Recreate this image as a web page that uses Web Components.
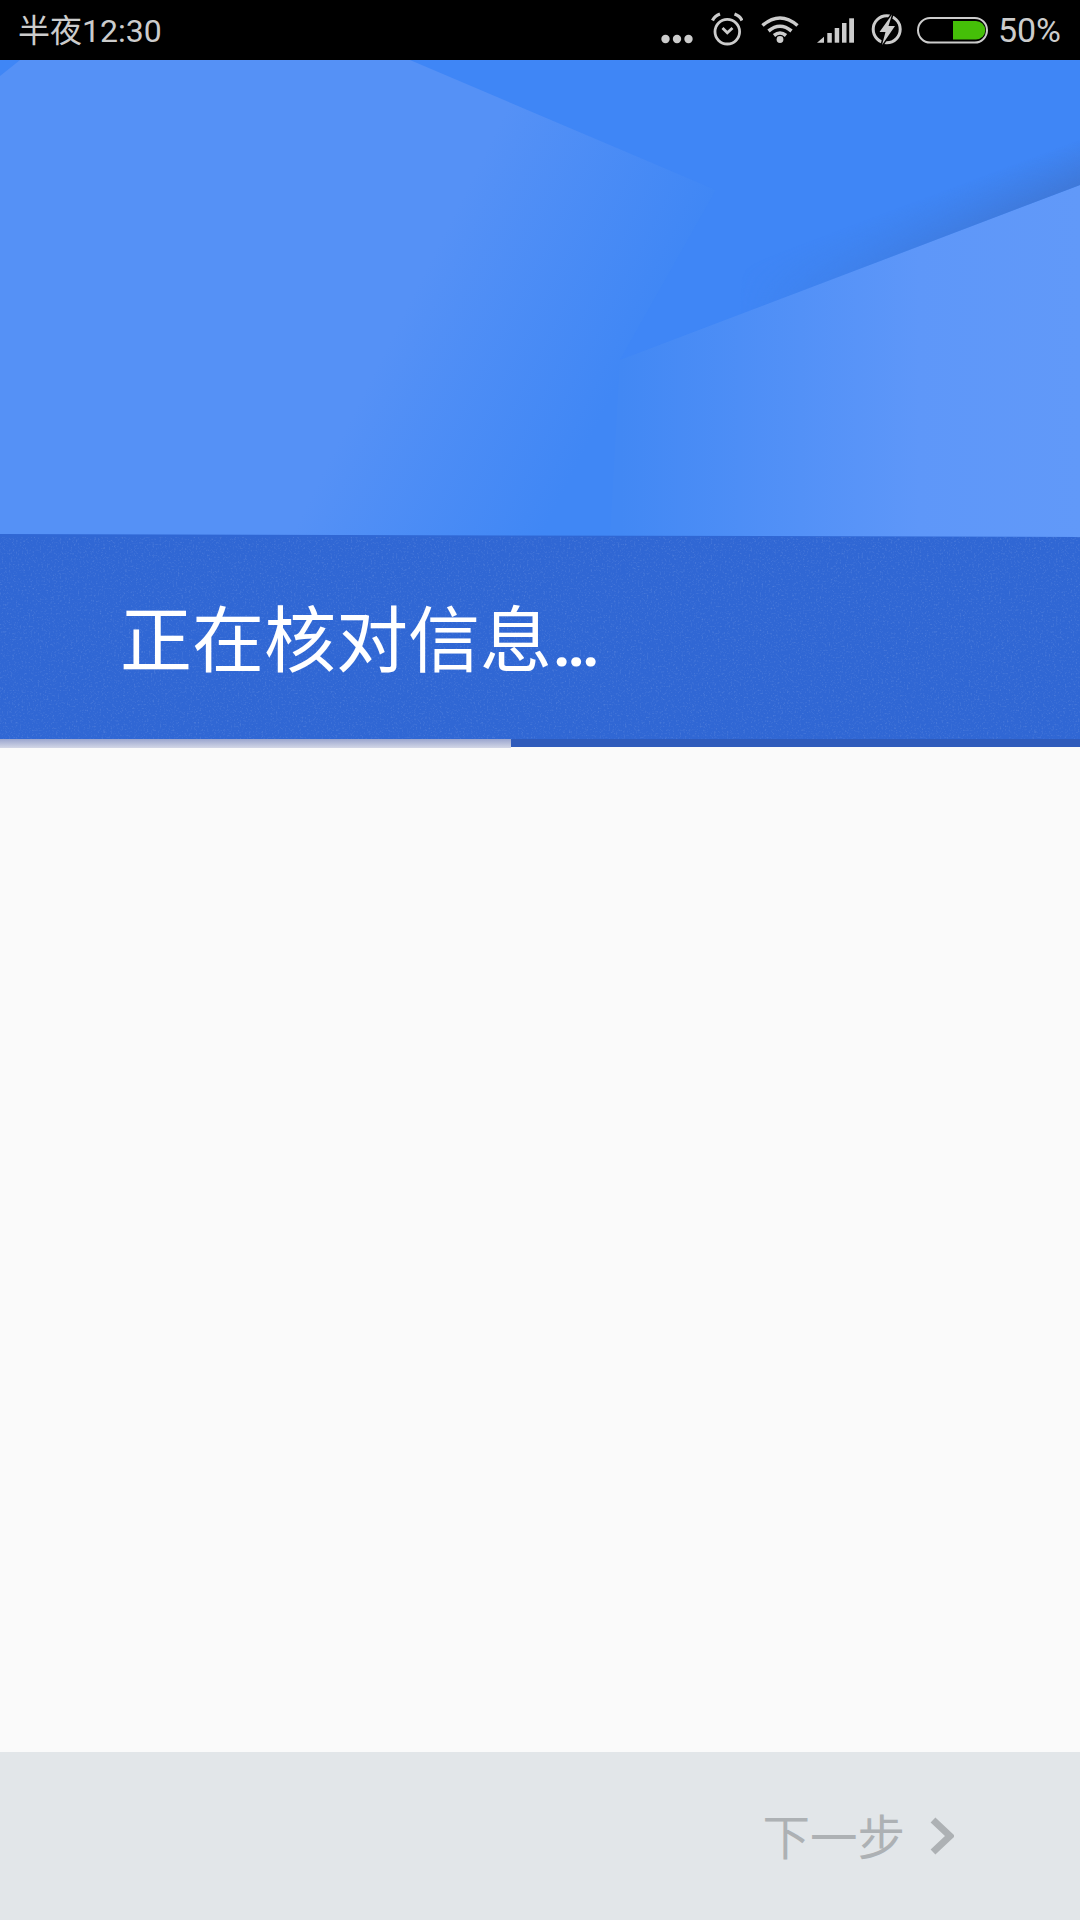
<!DOCTYPE html>
<html lang="zh">
<head>
<meta charset="utf-8">
<title>正在核对信息</title>
<style>
    html, body { margin: 0; background: #fafafa; }
</style>
</head>
<body>
<app-page>
    <status-bar slot="status" time="半夜12:30" level="50%"></status-bar>
    <hero-banner slot="hero"></hero-banner>
    <title-band slot="band">正在核对信息<span slot="dots">...</span></title-band>
    <progress-line slot="band" done="511"></progress-line>
    <footer-bar slot="footer">下一步</footer-bar>
</app-page>

<script>
const FONT = 'Roboto, "Noto Sans CJK SC", sans-serif';

class AppPage extends HTMLElement {
    constructor() {
        super();
        this.attachShadow({ mode: 'open' });
        this.shadowRoot.innerHTML = `
            <style>
                :host {
                    display: flex;
                    flex-direction: column;
                    width: 1080px;
                    height: 1920px;
                    background: #fafafa;
                    font-family: ${FONT};
                }
                .body { flex: 1; }
            </style>
            <slot name="status"></slot>
            <slot name="hero"></slot>
            <slot name="band"></slot>
            <div class="body"></div>
            <slot name="footer"></slot>
        `;
    }
}

class StatusBar extends HTMLElement {
    constructor() {
        super();
        this.attachShadow({ mode: 'open' });
        const time = this.getAttribute('time');
        const level = this.getAttribute('level');
        // every icon is drawn in a box 60 high, so y is the y of the bar
        this.shadowRoot.innerHTML = `
            <style>
                :host {
                    display: flex;
                    align-items: center;
                    justify-content: space-between;
                    height: 60px;
                    padding: 0 19px 0 18px;
                    background: #000;
                    color: #ccc;
                    font-size: 32px;
                }
                .time { padding-bottom: 4px; }
                .icons { display: flex; align-items: center; }
                svg { display: block; height: 60px; margin-left: 18px; }
                .level { margin-left: 10px; font-size: 34px; }
            </style>
            <span class="time">${time}</span>
            <div class="icons">
                <svg width="32" viewBox="0 0 32 60" fill="#ccc">
                    <circle cx="4.5" cy="39" r="4.2"/>
                    <circle cx="16" cy="39" r="4.2"/>
                    <circle cx="27.5" cy="39" r="4.2"/>
                </svg>
                <svg width="32" viewBox="0 0 32 60" fill="none" stroke="#ccc" stroke-width="2.8">
                    <circle cx="16.3" cy="31.7" r="12.3"/>
                    <path d="M1.5 20.5Q3.5 16 9 14M23.5 14Q29 16 31 20.5" stroke-width="3.2"/>
                    <path d="M11.5 28L16.3 32.8L21.5 28"/>
                </svg>
                <svg width="38" viewBox="0 0 38 60" fill="none" stroke="#ccc" stroke-width="3.6">
                    <path d="M1.5 25.5Q19 10.5 36.5 25.5"/>
                    <path d="M7.5 31Q19 21.5 30.5 31"/>
                    <path d="M13 35.5Q19 30.5 25 35.5"/>
                    <circle cx="19" cy="39.5" r="3.4" fill="#ccc" stroke="none"/>
                </svg>
                <svg width="37" viewBox="0 0 37 60" fill="#ccc">
                    <path d="M0 42.7L7 36.7V42.7Z"/>
                    <rect x="10.3" y="33" width="4.5" height="9.7"/>
                    <rect x="17.7" y="28" width="4.5" height="14.7"/>
                    <rect x="25" y="23" width="4.5" height="19.7"/>
                    <rect x="32.2" y="18.3" width="4.8" height="24.4"/>
                </svg>
                <svg width="32" viewBox="0 0 32 60" style="margin-left:17px">
                    <circle cx="15.7" cy="29.3" r="13.5" fill="none" stroke="#ccc" stroke-width="3"/>
                    <path d="M21 14.5L8.5 32H14.5L11 45L24 26H17.5Z" fill="#ccc" stroke="#000" stroke-width="3" paint-order="stroke"/>
                </svg>
                <svg width="71" viewBox="0 0 71 60" style="margin-left:14px">
                    <rect x="1" y="18" width="69" height="24.5" rx="12.2" fill="none" stroke="#ccc" stroke-width="2"/>
                    <path d="M36 21H59A9.2 9.2 0 0 1 59 39.5H36Z" fill="#45bf08"/>
                </svg>
                <span class="level">${level}</span>
            </div>
        `;
    }
}

class HeroBanner extends HTMLElement {
    constructor() {
        super();
        this.attachShadow({ mode: 'open' });
        this.shadowRoot.innerHTML = `
            <style>
                :host { display: block; height: 477px; }
                svg { display: block; }
            </style>
            <svg width="1080" height="477" viewBox="0 0 1080 477">
                <defs>
                    <!-- the left panel darkens towards the line (716,130)-(610,340) -->
                    <linearGradient id="left" gradientUnits="userSpaceOnUse" x1="430" y1="200" x2="630" y2="301">
                        <stop offset="0" stop-color="#5591f6"/>
                        <stop offset="1" stop-color="#4087f5"/>
                    </linearGradient>
                    <linearGradient id="right" gradientUnits="userSpaceOnUse" x1="620" y1="0" x2="1080" y2="0">
                        <stop offset="0" stop-color="#4288f4"/>
                        <stop offset=".65" stop-color="#5e97f9"/>
                        <stop offset="1" stop-color="#6199f9"/>
                    </linearGradient>
                    <linearGradient id="shade" gradientUnits="userSpaceOnUse" x1="1065" y1="85" x2="1080" y2="125">
                        <stop offset="0" stop-color="#3f78d8" stop-opacity="0"/>
                        <stop offset="1" stop-color="#3f78d8"/>
                    </linearGradient>
                    <linearGradient id="fade" gradientUnits="userSpaceOnUse" x1="740" y1="0" x2="1080" y2="0">
                        <stop offset="0" stop-color="#000"/>
                        <stop offset="1" stop-color="#fff"/>
                    </linearGradient>
                    <mask id="shade-mask" maskUnits="userSpaceOnUse" x="0" y="0" width="1080" height="477">
                        <rect width="1080" height="477" fill="url(#fade)"/>
                    </mask>
                </defs>
                <rect width="1080" height="477" fill="url(#left)"/>
                <path d="M0 0H20L0 16Z" fill="#3f86f6"/>
                <path d="M410 0H1080V125L620 300L716 130Z" fill="#3f86f6"/>
                <path d="M1080 125L620 300L610 477H1080Z" fill="url(#right)"/>
                <path d="M1080 60V125L620 300V235Z" fill="url(#shade)" mask="url(#shade-mask)"/>
                <path d="M0 474L1080 477H0Z" fill="#3067d4"/>
            </svg>
        `;
    }
}

class TitleBand extends HTMLElement {
    constructor() {
        super();
        this.attachShadow({ mode: 'open' });
        this.shadowRoot.innerHTML = `
            <style>
                :host {
                    display: flex;
                    align-items: center;
                    position: relative;
                    height: 202px;
                    padding-left: 120px;
                    background: #3067d4;
                    color: #fff;
                    font-size: 72px;
                }
                svg { position: absolute; inset: 0; }
                span { position: relative; padding-bottom: 8px; }
                .dots { padding: 0; font-weight: 500; letter-spacing: -5.5px; }
            </style>
            <svg width="1080" height="202">
                <filter id="grain">
                    <feTurbulence type="fractalNoise" baseFrequency=".55" numOctaves="2" seed="4"/>
                    <feColorMatrix values="0 0 0 0 1  0 0 0 0 1  0 0 0 0 1  0 0 0 1.6 -.85"/>
                </filter>
                <rect width="1080" height="202" filter="url(#grain)" opacity=".22"/>
            </svg>
            <span><slot></slot><span class="dots"><slot name="dots"></slot></span></span>
        `;
    }
}

class ProgressLine extends HTMLElement {
    constructor() {
        super();
        this.attachShadow({ mode: 'open' });
        const done = this.getAttribute('done');
        this.shadowRoot.innerHTML = `
            <style>
                :host {
                    display: flex;
                    height: 9px;
                    background: linear-gradient(#2f5bbb 88%, #fafafa 88%);
                }
                .done {
                    width: ${done}px;
                    background: linear-gradient(#9aa5cf, #d3d7e6);
                }
            </style>
            <div class="done"></div>
        `;
    }
}

class FooterBar extends HTMLElement {
    constructor() {
        super();
        this.attachShadow({ mode: 'open' });
        this.shadowRoot.innerHTML = `
            <style>
                :host {
                    display: flex;
                    align-items: center;
                    justify-content: flex-end;
                    gap: 25px;
                    height: 168px;
                    padding-right: 126px;
                    background: #e2e6e9;
                    color: #adb1b4;
                    font-size: 47.5px;
                }
                span { padding-bottom: 3px; }
                svg { display: block; }
            </style>
            <span><slot></slot></span>
            <svg width="24" height="38" viewBox="0 0 24 38" fill="none" stroke="#adb1b4" stroke-width="7">
                <path d="M3 3L20 19L3 35"/>
            </svg>
        `;
    }
}

customElements.define('app-page', AppPage);
customElements.define('status-bar', StatusBar);
customElements.define('hero-banner', HeroBanner);
customElements.define('title-band', TitleBand);
customElements.define('progress-line', ProgressLine);
customElements.define('footer-bar', FooterBar);
</script>
</body>
</html>
